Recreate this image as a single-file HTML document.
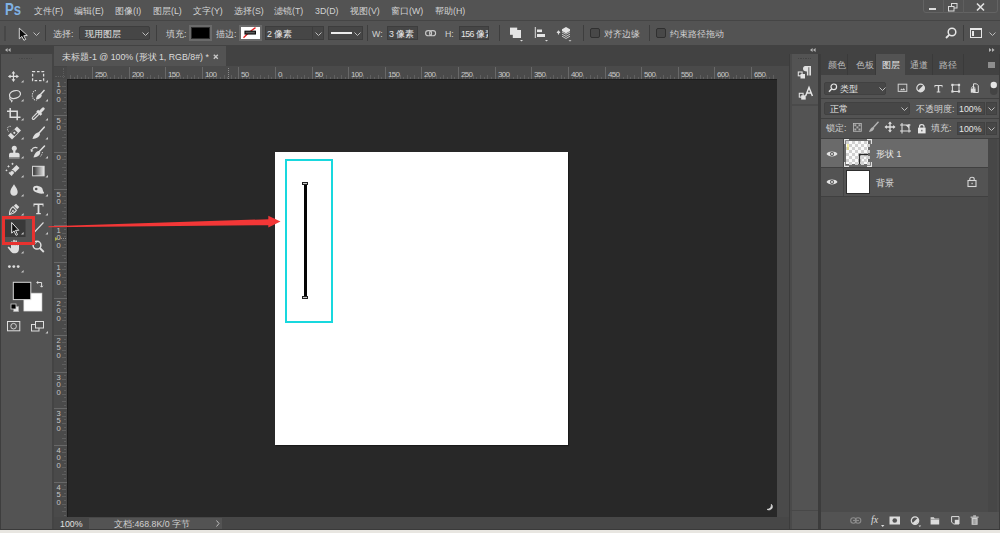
<!DOCTYPE html><html><head><meta charset="utf-8"><style>*{box-sizing:border-box;margin:0;padding:0}
html,body{width:1000px;height:533px;overflow:hidden;background:#535353;font-family:"Liberation Sans",sans-serif;color:#d2d2d2;font-size:8.8px}
.a{position:absolute}
.t{position:absolute;white-space:nowrap;line-height:10px}
svg{position:absolute;overflow:visible}
.rl{position:absolute;font-size:8px;line-height:8px;color:#c8c8c8;letter-spacing:-0.75px;white-space:nowrap}
.vl{position:absolute;font-size:7.6px;line-height:7.3px;color:#c8c8c8;width:8px;text-align:center;white-space:normal;word-break:break-all}
</style></head><body>
<div class="a" style="left:0px;top:0px;width:1000px;height:20px;background:#535353;"></div>
<div class="a" style="left:0px;top:20px;width:1000px;height:1px;background:#454545;"></div>
<div class="t" style="left:5.3px;top:1.3px;font-size:16.5px;line-height:16px;font-weight:bold;color:#80b2e4;transform:scaleX(0.8);transform-origin:0 0">Ps</div>
<div class="t" style="left:34px;top:6px;">文件(F)</div>
<div class="t" style="left:74px;top:6px;">编辑(E)</div>
<div class="t" style="left:115px;top:6px;">图像(I)</div>
<div class="t" style="left:153px;top:6px;">图层(L)</div>
<div class="t" style="left:193px;top:6px;">文字(Y)</div>
<div class="t" style="left:234px;top:6px;">选择(S)</div>
<div class="t" style="left:274px;top:6px;">滤镜(T)</div>
<div class="t" style="left:315px;top:6px;">3D(D)</div>
<div class="t" style="left:350px;top:6px;">视图(V)</div>
<div class="t" style="left:391px;top:6px;">窗口(W)</div>
<div class="t" style="left:435px;top:6px;">帮助(H)</div>
<div class="a" style="left:923px;top:-2px;width:75px;height:15px;border:1px solid #636363;border-radius:0 0 3px 3px"></div>
<div class="a" style="left:943px;top:0px;width:1px;height:13px;background:#5f5f5f;"></div>
<div class="a" style="left:963px;top:0px;width:1px;height:13px;background:#5f5f5f;"></div>
<div class="a" style="left:929px;top:8px;width:7px;height:2px;background:#dcdcdc;"></div>
<svg style="left:948px;top:3px" width="10" height="9" viewBox="0 0 10 9"><rect x="3.5" y="0.5" width="5.5" height="4.5" fill="none" stroke="#dcdcdc" stroke-width="1"/><rect x="0.5" y="3.5" width="5.5" height="4.5" fill="#535353" stroke="#dcdcdc" stroke-width="1"/></svg>
<svg style="left:976px;top:3px" width="9" height="8" viewBox="0 0 9 8"><path d="M1 0.5 L8 7.5 M8 0.5 L1 7.5" stroke="#e2e2e2" stroke-width="1.6"/></svg>
<div class="a" style="left:0px;top:21px;width:1000px;height:24px;background:#535353;"></div>
<div class="a" style="left:4px;top:26px;width:2px;height:15px;background:#474747;"></div>
<svg style="left:18px;top:27px" width="10" height="14" viewBox="0 0 10 14"><path d="M1.3 1.2 L1.3 11.8 L3.9 9.4 L5.9 13.3 L7.7 12.4 L5.8 8.7 L9.3 8.5 Z" fill="#0c0c0c" stroke="#e8e8e8" stroke-width="0.9" stroke-linejoin="miter"/></svg>
<svg style="left:33px;top:32px" width="7" height="5" viewBox="0 0 7 5"><path d="M0.5 0.5 L3.5 3.5 L6.5 0.5" fill="none" stroke="#bdbdbd" stroke-width="1"/></svg>
<div class="a" style="left:45px;top:25px;width:1px;height:16px;background:#3e3e3e;"></div>
<div class="t" style="left:53px;top:29px;">选择:</div>
<div class="a" style="left:79px;top:26px;width:71px;height:14px;background:#464646;border:1px solid #3d3d3d;border-radius:2px"></div>
<div class="t" style="left:85px;top:29px;color:#e6e6e6">现用图层</div>
<svg style="left:142px;top:32px" width="7" height="5" viewBox="0 0 7 5"><path d="M0.5 0.5 L3.5 3.5 L6.5 0.5" fill="none" stroke="#bdbdbd" stroke-width="1"/></svg>
<div class="a" style="left:156px;top:25px;width:1px;height:16px;background:#3e3e3e;"></div>
<div class="t" style="left:166px;top:29px;">填充:</div>
<div class="a" style="left:189px;top:25px;width:23px;height:16px;background:#2e2e2e;border:2px solid #6a6a6a"></div>
<div class="a" style="left:192px;top:28px;width:17px;height:10px;background:#000;"></div>
<div class="t" style="left:216px;top:29px;">描边:</div>
<div class="a" style="left:239px;top:25px;width:23px;height:16px;background:#fff;border:2px solid #6a6a6a"></div>
<svg style="left:241px;top:27px" width="19" height="12" viewBox="0 0 19 12"><path d="M2.5 10.8 L6.8 6.5 M9.5 4.2 L14.5 0.6" stroke="#e42020" stroke-width="1.3"/><rect x="4" y="4.2" width="10.4" height="2.8" fill="#5a5a5a" stroke="#0a0a0a" stroke-width="1.1"/></svg>
<div class="a" style="left:265px;top:26px;width:59px;height:14px;background:#464646;border:1px solid #3d3d3d;"></div>
<div class="a" style="left:312px;top:26px;width:1px;height:14px;background:#3d3d3d;"></div>
<div class="t" style="left:267px;top:29px;color:#e6e6e6">2 像素</div>
<svg style="left:315px;top:32px" width="7" height="5" viewBox="0 0 7 5"><path d="M0.5 0.5 L3.5 3.5 L6.5 0.5" fill="none" stroke="#bdbdbd" stroke-width="1"/></svg>
<div class="a" style="left:328px;top:26px;width:35px;height:14px;background:#464646;border:1px solid #3d3d3d;"></div>
<div class="a" style="left:331px;top:32px;width:21px;height:2px;background:#ececec;"></div>
<svg style="left:354px;top:32px" width="7" height="5" viewBox="0 0 7 5"><path d="M0.5 0.5 L3.5 3.5 L6.5 0.5" fill="none" stroke="#bdbdbd" stroke-width="1"/></svg>
<div class="a" style="left:367px;top:25px;width:1px;height:16px;background:#3e3e3e;"></div>
<div class="t" style="left:372px;top:29px;">W:</div>
<div class="a" style="left:387px;top:26px;width:31px;height:14px;background:#464646;border:1px solid #3d3d3d;"></div>
<div class="t" style="left:389px;top:29px;color:#e6e6e6">3 像素</div>
<svg style="left:425px;top:29.5px" width="12" height="7" viewBox="0 0 12 7"><rect x="0.6" y="0.6" width="6" height="5.2" rx="2.6" fill="none" stroke="#c8c8c8" stroke-width="1.1"/><rect x="4.6" y="0.6" width="6" height="5.2" rx="2.6" fill="none" stroke="#c8c8c8" stroke-width="1.1"/></svg>
<div class="t" style="left:445px;top:29px;">H:</div>
<div class="a" style="left:459px;top:26px;width:30px;height:14px;background:#464646;border:1px solid #3d3d3d;overflow:hidden"><div class="t" style="left:1px;top:2px;color:#e6e6e6"><span style="letter-spacing:-0.6px">156 </span>像素</div></div>
<div class="a" style="left:499px;top:25px;width:1px;height:16px;background:#3e3e3e;"></div>
<svg style="left:508px;top:26px" width="17" height="17" viewBox="0 0 17 17"><rect x="2" y="1.6" width="7.2" height="7.2" fill="#e4e4e4"/><rect x="4.8" y="4" width="8.2" height="8" fill="#e4e4e4"/><path d="M12 14 h3 l-1.5 1.5z" fill="#dcdcdc"/></svg>
<svg style="left:533px;top:26px" width="17" height="17" viewBox="0 0 17 17"><rect x="1.8" y="1" width="1" height="11" fill="#dcdcdc"/><rect x="4" y="3.5" width="5" height="2.6" fill="#e4e4e4"/><rect x="4" y="8" width="8" height="3" fill="#e4e4e4"/><path d="M12 14 h3 l-1.5 1.5z" fill="#dcdcdc"/></svg>
<svg style="left:555px;top:26px" width="18" height="17" viewBox="0 0 18 17"><path d="M3.5 8.5 V5.5 M2 6.8 L3.5 5 L5 6.8" fill="none" stroke="#dcdcdc" stroke-width="1.1"/><path d="M11 1 L15 3.2 V5 L11 7.2 L7 5 V3.2z" fill="#e4e4e4"/><path d="M7 6 L11 8.2 L15 6 M7 8.2 L11 10.4 L15 8.2 M7 10.2 L11 12.5 L15 10.2" fill="none" stroke="#cfcfcf" stroke-width="0.9"/><path d="M13.5 14.2 h3 l-1.5 1.3z" fill="#dcdcdc"/></svg>
<div class="a" style="left:583px;top:25px;width:1px;height:16px;background:#3e3e3e;"></div>
<div class="a" style="left:590px;top:28px;width:10px;height:10px;background:#484848;border:1px solid #303030;border-radius:2px"></div>
<div class="t" style="left:604px;top:29px;">对齐边缘</div>
<div class="a" style="left:649px;top:25px;width:1px;height:16px;background:#3e3e3e;"></div>
<div class="a" style="left:656px;top:28px;width:10px;height:10px;background:#484848;border:1px solid #303030;border-radius:2px"></div>
<div class="t" style="left:670px;top:29px;">约束路径拖动</div>
<svg style="left:945px;top:27px" width="12" height="12" viewBox="0 0 12 12"><circle cx="7" cy="5" r="3.8" fill="none" stroke="#e6e6e6" stroke-width="1.5"/><path d="M4.2 7.8 L1 11" stroke="#e6e6e6" stroke-width="1.8"/></svg>
<div class="a" style="left:963px;top:25px;width:1px;height:16px;background:#3e3e3e;"></div>
<div class="a" style="left:970px;top:28px;width:12px;height:10px;background:transparent;border:1px solid #e6e6e6;border-top-width:2px"></div>
<div class="a" style="left:972px;top:31px;width:1.5px;height:5px;background:#e6e6e6;"></div>
<svg style="left:989px;top:32px" width="7" height="5" viewBox="0 0 7 5"><path d="M0.5 0.5 L3.5 3.5 L6.5 0.5" fill="none" stroke="#bdbdbd" stroke-width="1"/></svg>
<div class="a" style="left:0px;top:45px;width:1000px;height:9px;background:#424242;"></div>
<svg style="left:5px;top:47.5px" width="6" height="4" viewBox="0 0 6 4"><path d="M2.6 0 L0 2 L2.6 4z M5.6 0 L3 2 L5.6 4z" fill="#b4b4b4"/></svg>
<div class="a" style="left:0px;top:54px;width:54px;height:476px;background:#3e3e3e;"></div>
<div class="a" style="left:1px;top:54px;width:51px;height:475px;background:#535353;"></div>
<div class="a" style="left:19.0px;top:58px;width:1.4px;height:1.4px;background:#474747;"></div>
<div class="a" style="left:21.4px;top:58px;width:1.4px;height:1.4px;background:#474747;"></div>
<div class="a" style="left:23.8px;top:58px;width:1.4px;height:1.4px;background:#474747;"></div>
<div class="a" style="left:26.2px;top:58px;width:1.4px;height:1.4px;background:#474747;"></div>
<div class="a" style="left:28.6px;top:58px;width:1.4px;height:1.4px;background:#474747;"></div>
<div class="a" style="left:31.0px;top:58px;width:1.4px;height:1.4px;background:#474747;"></div>
<svg style="left:0;top:0" width="52" height="340" viewBox="0 0 52 340"><rect x="4.5" y="220" width="21" height="17" fill="#393939"/><path d="M10 76.4 H17 M13.45 72.8 V80" stroke="#dedede" stroke-width="1.2"/><path d="M7.9 76.4 L10.6 74.5 L10.6 78.3z M19 76.4 L16.3 74.5 L16.3 78.3z M13.45 70.9 L11.55 73.6 L15.35 73.6z M13.45 81.9 L11.55 79.2 L15.35 79.2z" fill="#dedede"/><path d="M23.6 82.6 L21.0 82.6 L23.6 80.0z" fill="#c8c8c8"/><rect x="32.6" y="71.6" width="11" height="9" fill="none" stroke="#dedede" stroke-width="1.3" stroke-dasharray="2.6 1.8"/><path d="M48 82.6 L45.4 82.6 L48 80.0z" fill="#c8c8c8"/><ellipse cx="15" cy="94.6" rx="5.6" ry="3.8" transform="rotate(-18 15 94.6)" fill="none" stroke="#dedede" stroke-width="1.3"/><path d="M10.2 97 C9 99 10.5 100 12 100.5 C12.5 101 11.5 102 11 102" fill="none" stroke="#dedede" stroke-width="1.1"/><path d="M23.6 101.6 L21.0 101.6 L23.6 99.0z" fill="#c8c8c8"/><path d="M36 90.5 C31 91 31 100 36.5 100.5" fill="none" stroke="#dedede" stroke-width="1.1" stroke-dasharray="1.2 1"/><path d="M44.5 90 L40 95" stroke="#dedede" stroke-width="1.4"/><path d="M40.5 94 C38 94 36 96.5 36 99.5 C39 99.5 41.5 98 41.8 95.3z" fill="#dedede"/><path d="M48 101.6 L45.4 101.6 L48 99.0z" fill="#c8c8c8"/><path d="M10.2 108 V117.3 H20.5 M7 111.2 H17.2 V120.3" fill="none" stroke="#dedede" stroke-width="1.5"/><path d="M23.6 120.6 L21.0 120.6 L23.6 118.0z" fill="#c8c8c8"/><path d="M33.4 118.2 L38.3 113.3" stroke="#dedede" stroke-width="3.4" stroke-linecap="round"/><path d="M33.4 118.2 L38.3 113.3" stroke="#535353" stroke-width="1.2" stroke-linecap="round"/><path d="M37.2 110.6 L41.4 114.8" stroke="#dedede" stroke-width="2.6"/><path d="M39.8 112.2 L43.2 108.8" stroke="#dedede" stroke-width="3" stroke-linecap="round"/><path d="M48 120.6 L45.4 120.6 L48 118.0z" fill="#c8c8c8"/><path d="M8 135.5 L17 126.5 L21 130.5 L12 139.5z" fill="#dedede"/><rect x="11.8" y="130.3" width="5" height="5" transform="rotate(45 14.3 132.8)" fill="#535353"/><circle cx="14.3" cy="132.8" r="1.1" fill="#dedede"/><path d="M8.5 131.5 C6 128 8.5 125.5 11 126.5" fill="none" stroke="#dedede" stroke-width="0.9" stroke-dasharray="1 0.8"/><path d="M23.6 139.6 L21.0 139.6 L23.6 137.0z" fill="#c8c8c8"/><path d="M44.2 127.2 L38.5 133.5" stroke="#dedede" stroke-width="1.6" stroke-linecap="round"/><path d="M38.8 132.5 C36 132.5 33.5 135 32.5 139 C36.5 138.5 39.5 137 40 134z" fill="#dedede"/><path d="M48 139.6 L45.4 139.6 L48 137.0z" fill="#c8c8c8"/><circle cx="14.3" cy="148.3" r="2.5" fill="#dedede"/><rect x="13.2" y="149.5" width="2.2" height="3.5" fill="#dedede"/><path d="M9 157 V154.5 C9 153.3 10 152.8 11.5 152.8 H17 C18.5 152.8 19.6 153.3 19.6 154.5 V157z" fill="#dedede"/><rect x="9" y="157.3" width="10.6" height="1.2" fill="#aaa"/><path d="M23.6 158.6 L21.0 158.6 L23.6 156.0z" fill="#c8c8c8"/><path d="M44.5 146 L38.8 152" stroke="#dedede" stroke-width="1.5" stroke-linecap="round"/><path d="M39 151 C36.5 151 34.5 153.5 33.5 157.5 C37.3 157 40 155.5 40.3 152.5z" fill="#dedede"/><path d="M42.5 152 C42 154.5 41 156 40 157" fill="none" stroke="#dedede" stroke-width="0.9" stroke-dasharray="1 0.8"/><path d="M31.5 150 C33 147.5 35.5 147 37.5 148" fill="none" stroke="#dedede" stroke-width="1.1"/><path d="M30.5 149 L33.5 151 L31 152z" fill="#dedede"/><path d="M48 158.6 L45.4 158.6 L48 156.0z" fill="#c8c8c8"/><path d="M12 175.5 L19.5 168 L16.5 165 L9 172.5z" fill="#dedede"/><circle cx="12" cy="173" r="2.5" fill="none" stroke="#535353" stroke-width="1"/><path d="M9 172.5 L12 175.5" stroke="#dedede" stroke-width="1.2"/><path d="M8.5 165 l0.6 1 l1 0.4 l-1 0.4 l-0.6 1 l-0.6 -1 l-1 -0.4 l1 -0.4z M12.5 162.5 l0.6 1 l1 0.4 l-1 0.4 l-0.6 1 l-0.6 -1 l-1 -0.4 l1 -0.4z M6.5 169.3 l0.5 0.8 l0.8 0.3 l-0.8 0.3 l-0.5 0.8 l-0.5 -0.8 l-0.8 -0.3 l0.8 -0.3z" fill="#dedede"/><path d="M23.6 177.6 L21.0 177.6 L23.6 175.0z" fill="#c8c8c8"/><defs><linearGradient id="gr" x1="0" x2="1" y1="0" y2="0"><stop offset="0" stop-color="#2a2a2a"/><stop offset="1" stop-color="#e8e8e8"/></linearGradient></defs><rect x="32.6" y="166.3" width="11.5" height="9.5" fill="url(#gr)" stroke="#dedede" stroke-width="1"/><path d="M48 177.6 L45.4 177.6 L48 175.0z" fill="#c8c8c8"/><path d="M14 184.3 C12 187.5 10.3 189.5 10.3 192 C10.3 194.3 12 195.8 14 195.8 C16 195.8 17.7 194.3 17.7 192 C17.7 189.5 16 187.5 14 184.3z" fill="#dedede"/><path d="M23.6 196.6 L21.0 196.6 L23.6 194.0z" fill="#c8c8c8"/><path d="M33 188.5 C33 186 36 185.5 38 186 C40.5 186.5 42.8 187.5 42.8 190 C43 192 44.5 192 44 193.5 C40 194 37 193 35.5 192 C34 191.5 33 190.5 33 188.5z" fill="#dedede"/><circle cx="36.2" cy="189" r="1.3" fill="#535353"/><path d="M48 196.6 L45.4 196.6 L48 194.0z" fill="#c8c8c8"/><path d="M9.5 214.5 C9.5 211 10.5 208.5 13 206.8 L16.5 210.3 C14.8 212.8 12.5 214 9.5 214.5z" fill="none" stroke="#dedede" stroke-width="1.1"/><path d="M9.5 214.5 L12.7 211.3" stroke="#dedede" stroke-width="0.8"/><circle cx="13" cy="211" r="0.9" fill="#dedede"/><path d="M13.8 205.8 L16 203.8 L19.3 207 L17.3 209.3z" fill="#dedede"/><path d="M23.6 215.6 L21.0 215.6 L23.6 213.0z" fill="#c8c8c8"/><path d="M33.5 203.6 H43.5 V206.5 H42.6 V205 H39.4 V213 H40.8 V214.2 H36.2 V213 H37.6 V205 H34.4 V206.5 H33.5z" fill="#dedede"/><path d="M48 215.6 L45.4 215.6 L48 213.0z" fill="#c8c8c8"/><path d="M11.7 222.5 V233.2 L14 230.8 L16 235.3 L17.5 234.6 L15.5 230.3 L18.8 230.3z" fill="#0e0e0e" stroke="#e4e4e4" stroke-width="1"/><path d="M23.6 234.6 L21.0 234.6 L23.6 232.0z" fill="#c8c8c8"/><path d="M34.5 232 L43.5 222.5" stroke="#dedede" stroke-width="1.1"/><path d="M48 234.6 L45.4 234.6 L48 232.0z" fill="#c8c8c8"/><path d="M11.9 247 V242 M14 246.5 V240.6 M16.1 246.5 V241 M18.2 247 V242.6" stroke="#dedede" stroke-width="1.6" stroke-linecap="round"/><path d="M11 245.5 H19 V248.5 C19 251 18 253 15.5 253.3 H13.5 C12 253 11 252 10 250.5 L7.8 247.8 C7.5 247 8.4 246.4 9.2 247 L11 248.5z" fill="#dedede"/><path d="M23.6 253.6 L21.0 253.6 L23.6 251.0z" fill="#c8c8c8"/><circle cx="37" cy="245.2" r="3.9" fill="none" stroke="#dedede" stroke-width="1.5"/><path d="M39.8 248 L43.8 252" stroke="#dedede" stroke-width="1.8"/><path d="M35 244 C35.3 243 36 242.5 37 242.5" fill="none" stroke="#dedede" stroke-width="0.8"/><circle cx="9.4" cy="266.6" r="1.4" fill="#dedede"/><circle cx="13.8" cy="266.6" r="1.4" fill="#dedede"/><circle cx="18.2" cy="266.6" r="1.4" fill="#dedede"/><path d="M23.6 272.6 L21.0 272.6 L23.6 270.0z" fill="#c8c8c8"/><rect x="23.8" y="293.1" width="18.2" height="18" fill="#fff" stroke="#bdbdbd" stroke-width="0.6"/><rect x="13.3" y="282.3" width="17.5" height="17.3" fill="#000" stroke="#d8d8d8" stroke-width="1"/><path d="M38 281.2 L36.8 282.5 L38 283.8 M37 282.5 H41.6 V287 M40.3 285.8 L41.6 287.2 L42.9 285.8" fill="none" stroke="#dedede" stroke-width="1"/><rect x="13.5" y="306.5" width="5.2" height="5.2" fill="#e8e8e8" stroke="#999" stroke-width="0.5"/><rect x="11" y="304" width="5" height="5" fill="#000" stroke="#cfcfcf" stroke-width="0.8"/><rect x="7.5" y="321.5" width="12.3" height="9.3" fill="none" stroke="#dedede" stroke-width="1"/><circle cx="13.6" cy="326.2" r="2.8" fill="none" stroke="#dedede" stroke-width="0.9"/><rect x="31.5" y="324.5" width="7.5" height="6.5" fill="none" stroke="#dedede" stroke-width="1"/><rect x="35.5" y="321.5" width="8" height="6.5" fill="#535353" stroke="#dedede" stroke-width="1"/><path d="M48 333.6 L45.4 333.6 L48 331.0z" fill="#c8c8c8"/></svg>
<div class="a" style="left:1.5px;top:216px;width:33.5px;height:29px;background:transparent;border:3px solid #e8322f"></div>
<div class="a" style="left:52px;top:54px;width:2px;height:476px;background:#444444;"></div>
<div class="a" style="left:54px;top:45px;width:735px;height:485px;background:#424242;"></div>
<div class="a" style="left:54px;top:46px;width:172px;height:20px;background:#535353;"></div>
<div class="t" style="left:62px;top:52px;color:#dcdcdc">未标题-1 @ 100% (形状 1, RGB/8#) *</div>
<svg style="left:213.3px;top:53.8px" width="6" height="6" viewBox="0 0 6 6"><path d="M0.8 0.8 L4.8 4.8 M4.8 0.8 L0.8 4.8" stroke="#c8c8c8" stroke-width="1.35"/></svg>
<div class="a" style="left:54px;top:66px;width:723px;height:13px;background:#4a4a4a;"></div>
<div class="a" style="left:54px;top:79px;width:13px;height:438px;background:#4a4a4a;"></div>
<div class="a" style="left:67px;top:79px;width:710px;height:438px;background:#282828;"></div>
<div class="a" style="left:67px;top:78.6px;width:710px;height:1px;background:#1c1c1c;"></div>
<div class="a" style="left:66.6px;top:79px;width:1px;height:438px;background:#1c1c1c;"></div>
<div class="a" style="left:54px;top:66px;width:13px;height:13px;background:#474747;border-top:1px solid #444"></div>
<div class="a" style="left:63px;top:68px;width:1px;height:10px;background:transparent;border-left:1px dotted #5c5c5c"></div>
<div class="a" style="left:55px;top:76px;width:10px;height:1px;background:transparent;border-top:1px dotted #5c5c5c"></div>
<svg style="left:0;top:0" width="1000" height="533" viewBox="0 0 1000 533" shape-rendering="crispEdges"><rect x="70" y="75" width="1" height="4" fill="#5f5f5f"/><rect x="74" y="77" width="1" height="2" fill="#5f5f5f"/><rect x="77" y="75" width="1" height="4" fill="#5f5f5f"/><rect x="81" y="77" width="1" height="2" fill="#5f5f5f"/><rect x="85" y="75" width="1" height="4" fill="#5f5f5f"/><rect x="88" y="77" width="1" height="2" fill="#5f5f5f"/><rect x="92" y="67" width="1" height="12" fill="#686868"/><rect x="96" y="77" width="1" height="2" fill="#5f5f5f"/><rect x="99" y="75" width="1" height="4" fill="#5f5f5f"/><rect x="103" y="77" width="1" height="2" fill="#5f5f5f"/><rect x="107" y="75" width="1" height="4" fill="#5f5f5f"/><rect x="110" y="77" width="1" height="2" fill="#5f5f5f"/><rect x="114" y="75" width="1" height="4" fill="#5f5f5f"/><rect x="118" y="77" width="1" height="2" fill="#5f5f5f"/><rect x="121" y="75" width="1" height="4" fill="#5f5f5f"/><rect x="125" y="77" width="1" height="2" fill="#5f5f5f"/><rect x="129" y="67" width="1" height="12" fill="#686868"/><rect x="132" y="77" width="1" height="2" fill="#5f5f5f"/><rect x="136" y="75" width="1" height="4" fill="#5f5f5f"/><rect x="140" y="77" width="1" height="2" fill="#5f5f5f"/><rect x="143" y="75" width="1" height="4" fill="#5f5f5f"/><rect x="147" y="77" width="1" height="2" fill="#5f5f5f"/><rect x="150" y="75" width="1" height="4" fill="#5f5f5f"/><rect x="154" y="77" width="1" height="2" fill="#5f5f5f"/><rect x="158" y="75" width="1" height="4" fill="#5f5f5f"/><rect x="161" y="77" width="1" height="2" fill="#5f5f5f"/><rect x="165" y="67" width="1" height="12" fill="#686868"/><rect x="169" y="77" width="1" height="2" fill="#5f5f5f"/><rect x="172" y="75" width="1" height="4" fill="#5f5f5f"/><rect x="176" y="77" width="1" height="2" fill="#5f5f5f"/><rect x="180" y="75" width="1" height="4" fill="#5f5f5f"/><rect x="183" y="77" width="1" height="2" fill="#5f5f5f"/><rect x="187" y="75" width="1" height="4" fill="#5f5f5f"/><rect x="191" y="77" width="1" height="2" fill="#5f5f5f"/><rect x="194" y="75" width="1" height="4" fill="#5f5f5f"/><rect x="198" y="77" width="1" height="2" fill="#5f5f5f"/><rect x="202" y="67" width="1" height="12" fill="#686868"/><rect x="205" y="77" width="1" height="2" fill="#5f5f5f"/><rect x="209" y="75" width="1" height="4" fill="#5f5f5f"/><rect x="213" y="77" width="1" height="2" fill="#5f5f5f"/><rect x="216" y="75" width="1" height="4" fill="#5f5f5f"/><rect x="220" y="77" width="1" height="2" fill="#5f5f5f"/><rect x="224" y="75" width="1" height="4" fill="#5f5f5f"/><rect x="227" y="77" width="1" height="2" fill="#5f5f5f"/><rect x="231" y="75" width="1" height="4" fill="#5f5f5f"/><rect x="235" y="77" width="1" height="2" fill="#5f5f5f"/><rect x="238" y="67" width="1" height="12" fill="#686868"/><rect x="242" y="77" width="1" height="2" fill="#5f5f5f"/><rect x="246" y="75" width="1" height="4" fill="#5f5f5f"/><rect x="249" y="77" width="1" height="2" fill="#5f5f5f"/><rect x="253" y="75" width="1" height="4" fill="#5f5f5f"/><rect x="257" y="77" width="1" height="2" fill="#5f5f5f"/><rect x="260" y="75" width="1" height="4" fill="#5f5f5f"/><rect x="264" y="77" width="1" height="2" fill="#5f5f5f"/><rect x="268" y="75" width="1" height="4" fill="#5f5f5f"/><rect x="271" y="77" width="1" height="2" fill="#5f5f5f"/><rect x="275" y="67" width="1" height="12" fill="#686868"/><rect x="279" y="77" width="1" height="2" fill="#5f5f5f"/><rect x="282" y="75" width="1" height="4" fill="#5f5f5f"/><rect x="286" y="77" width="1" height="2" fill="#5f5f5f"/><rect x="290" y="75" width="1" height="4" fill="#5f5f5f"/><rect x="293" y="77" width="1" height="2" fill="#5f5f5f"/><rect x="297" y="75" width="1" height="4" fill="#5f5f5f"/><rect x="301" y="77" width="1" height="2" fill="#5f5f5f"/><rect x="304" y="75" width="1" height="4" fill="#5f5f5f"/><rect x="308" y="77" width="1" height="2" fill="#5f5f5f"/><rect x="312" y="67" width="1" height="12" fill="#686868"/><rect x="315" y="77" width="1" height="2" fill="#5f5f5f"/><rect x="319" y="75" width="1" height="4" fill="#5f5f5f"/><rect x="323" y="77" width="1" height="2" fill="#5f5f5f"/><rect x="326" y="75" width="1" height="4" fill="#5f5f5f"/><rect x="330" y="77" width="1" height="2" fill="#5f5f5f"/><rect x="334" y="75" width="1" height="4" fill="#5f5f5f"/><rect x="337" y="77" width="1" height="2" fill="#5f5f5f"/><rect x="341" y="75" width="1" height="4" fill="#5f5f5f"/><rect x="345" y="77" width="1" height="2" fill="#5f5f5f"/><rect x="348" y="67" width="1" height="12" fill="#686868"/><rect x="352" y="77" width="1" height="2" fill="#5f5f5f"/><rect x="356" y="75" width="1" height="4" fill="#5f5f5f"/><rect x="359" y="77" width="1" height="2" fill="#5f5f5f"/><rect x="363" y="75" width="1" height="4" fill="#5f5f5f"/><rect x="367" y="77" width="1" height="2" fill="#5f5f5f"/><rect x="370" y="75" width="1" height="4" fill="#5f5f5f"/><rect x="374" y="77" width="1" height="2" fill="#5f5f5f"/><rect x="378" y="75" width="1" height="4" fill="#5f5f5f"/><rect x="381" y="77" width="1" height="2" fill="#5f5f5f"/><rect x="385" y="67" width="1" height="12" fill="#686868"/><rect x="389" y="77" width="1" height="2" fill="#5f5f5f"/><rect x="392" y="75" width="1" height="4" fill="#5f5f5f"/><rect x="396" y="77" width="1" height="2" fill="#5f5f5f"/><rect x="400" y="75" width="1" height="4" fill="#5f5f5f"/><rect x="403" y="77" width="1" height="2" fill="#5f5f5f"/><rect x="407" y="75" width="1" height="4" fill="#5f5f5f"/><rect x="410" y="77" width="1" height="2" fill="#5f5f5f"/><rect x="414" y="75" width="1" height="4" fill="#5f5f5f"/><rect x="418" y="77" width="1" height="2" fill="#5f5f5f"/><rect x="421" y="67" width="1" height="12" fill="#686868"/><rect x="425" y="77" width="1" height="2" fill="#5f5f5f"/><rect x="429" y="75" width="1" height="4" fill="#5f5f5f"/><rect x="432" y="77" width="1" height="2" fill="#5f5f5f"/><rect x="436" y="75" width="1" height="4" fill="#5f5f5f"/><rect x="440" y="77" width="1" height="2" fill="#5f5f5f"/><rect x="443" y="75" width="1" height="4" fill="#5f5f5f"/><rect x="447" y="77" width="1" height="2" fill="#5f5f5f"/><rect x="451" y="75" width="1" height="4" fill="#5f5f5f"/><rect x="454" y="77" width="1" height="2" fill="#5f5f5f"/><rect x="458" y="67" width="1" height="12" fill="#686868"/><rect x="462" y="77" width="1" height="2" fill="#5f5f5f"/><rect x="465" y="75" width="1" height="4" fill="#5f5f5f"/><rect x="469" y="77" width="1" height="2" fill="#5f5f5f"/><rect x="473" y="75" width="1" height="4" fill="#5f5f5f"/><rect x="476" y="77" width="1" height="2" fill="#5f5f5f"/><rect x="480" y="75" width="1" height="4" fill="#5f5f5f"/><rect x="484" y="77" width="1" height="2" fill="#5f5f5f"/><rect x="487" y="75" width="1" height="4" fill="#5f5f5f"/><rect x="491" y="77" width="1" height="2" fill="#5f5f5f"/><rect x="495" y="67" width="1" height="12" fill="#686868"/><rect x="498" y="77" width="1" height="2" fill="#5f5f5f"/><rect x="502" y="75" width="1" height="4" fill="#5f5f5f"/><rect x="506" y="77" width="1" height="2" fill="#5f5f5f"/><rect x="509" y="75" width="1" height="4" fill="#5f5f5f"/><rect x="513" y="77" width="1" height="2" fill="#5f5f5f"/><rect x="517" y="75" width="1" height="4" fill="#5f5f5f"/><rect x="520" y="77" width="1" height="2" fill="#5f5f5f"/><rect x="524" y="75" width="1" height="4" fill="#5f5f5f"/><rect x="528" y="77" width="1" height="2" fill="#5f5f5f"/><rect x="531" y="67" width="1" height="12" fill="#686868"/><rect x="535" y="77" width="1" height="2" fill="#5f5f5f"/><rect x="539" y="75" width="1" height="4" fill="#5f5f5f"/><rect x="542" y="77" width="1" height="2" fill="#5f5f5f"/><rect x="546" y="75" width="1" height="4" fill="#5f5f5f"/><rect x="550" y="77" width="1" height="2" fill="#5f5f5f"/><rect x="553" y="75" width="1" height="4" fill="#5f5f5f"/><rect x="557" y="77" width="1" height="2" fill="#5f5f5f"/><rect x="561" y="75" width="1" height="4" fill="#5f5f5f"/><rect x="564" y="77" width="1" height="2" fill="#5f5f5f"/><rect x="568" y="67" width="1" height="12" fill="#686868"/><rect x="572" y="77" width="1" height="2" fill="#5f5f5f"/><rect x="575" y="75" width="1" height="4" fill="#5f5f5f"/><rect x="579" y="77" width="1" height="2" fill="#5f5f5f"/><rect x="583" y="75" width="1" height="4" fill="#5f5f5f"/><rect x="586" y="77" width="1" height="2" fill="#5f5f5f"/><rect x="590" y="75" width="1" height="4" fill="#5f5f5f"/><rect x="594" y="77" width="1" height="2" fill="#5f5f5f"/><rect x="597" y="75" width="1" height="4" fill="#5f5f5f"/><rect x="601" y="77" width="1" height="2" fill="#5f5f5f"/><rect x="605" y="67" width="1" height="12" fill="#686868"/><rect x="608" y="77" width="1" height="2" fill="#5f5f5f"/><rect x="612" y="75" width="1" height="4" fill="#5f5f5f"/><rect x="616" y="77" width="1" height="2" fill="#5f5f5f"/><rect x="619" y="75" width="1" height="4" fill="#5f5f5f"/><rect x="623" y="77" width="1" height="2" fill="#5f5f5f"/><rect x="627" y="75" width="1" height="4" fill="#5f5f5f"/><rect x="630" y="77" width="1" height="2" fill="#5f5f5f"/><rect x="634" y="75" width="1" height="4" fill="#5f5f5f"/><rect x="638" y="77" width="1" height="2" fill="#5f5f5f"/><rect x="641" y="67" width="1" height="12" fill="#686868"/><rect x="645" y="77" width="1" height="2" fill="#5f5f5f"/><rect x="649" y="75" width="1" height="4" fill="#5f5f5f"/><rect x="652" y="77" width="1" height="2" fill="#5f5f5f"/><rect x="656" y="75" width="1" height="4" fill="#5f5f5f"/><rect x="660" y="77" width="1" height="2" fill="#5f5f5f"/><rect x="663" y="75" width="1" height="4" fill="#5f5f5f"/><rect x="667" y="77" width="1" height="2" fill="#5f5f5f"/><rect x="670" y="75" width="1" height="4" fill="#5f5f5f"/><rect x="674" y="77" width="1" height="2" fill="#5f5f5f"/><rect x="678" y="67" width="1" height="12" fill="#686868"/><rect x="681" y="77" width="1" height="2" fill="#5f5f5f"/><rect x="685" y="75" width="1" height="4" fill="#5f5f5f"/><rect x="689" y="77" width="1" height="2" fill="#5f5f5f"/><rect x="692" y="75" width="1" height="4" fill="#5f5f5f"/><rect x="696" y="77" width="1" height="2" fill="#5f5f5f"/><rect x="700" y="75" width="1" height="4" fill="#5f5f5f"/><rect x="703" y="77" width="1" height="2" fill="#5f5f5f"/><rect x="707" y="75" width="1" height="4" fill="#5f5f5f"/><rect x="711" y="77" width="1" height="2" fill="#5f5f5f"/><rect x="714" y="67" width="1" height="12" fill="#686868"/><rect x="718" y="77" width="1" height="2" fill="#5f5f5f"/><rect x="722" y="75" width="1" height="4" fill="#5f5f5f"/><rect x="725" y="77" width="1" height="2" fill="#5f5f5f"/><rect x="729" y="75" width="1" height="4" fill="#5f5f5f"/><rect x="733" y="77" width="1" height="2" fill="#5f5f5f"/><rect x="736" y="75" width="1" height="4" fill="#5f5f5f"/><rect x="740" y="77" width="1" height="2" fill="#5f5f5f"/><rect x="744" y="75" width="1" height="4" fill="#5f5f5f"/><rect x="747" y="77" width="1" height="2" fill="#5f5f5f"/><rect x="751" y="67" width="1" height="12" fill="#686868"/><rect x="755" y="77" width="1" height="2" fill="#5f5f5f"/><rect x="758" y="75" width="1" height="4" fill="#5f5f5f"/><rect x="762" y="77" width="1" height="2" fill="#5f5f5f"/><rect x="766" y="75" width="1" height="4" fill="#5f5f5f"/><rect x="769" y="77" width="1" height="2" fill="#5f5f5f"/><rect x="773" y="75" width="1" height="4" fill="#5f5f5f"/></svg>
<div class="rl" style="left:95px;top:70.9px">250</div>
<div class="rl" style="left:132px;top:70.9px">200</div>
<div class="rl" style="left:168px;top:70.9px">150</div>
<div class="rl" style="left:205px;top:70.9px">100</div>
<div class="rl" style="left:241px;top:70.9px">50</div>
<div class="rl" style="left:278px;top:70.9px">0</div>
<div class="rl" style="left:315px;top:70.9px">50</div>
<div class="rl" style="left:351px;top:70.9px">100</div>
<div class="rl" style="left:388px;top:70.9px">150</div>
<div class="rl" style="left:424px;top:70.9px">200</div>
<div class="rl" style="left:461px;top:70.9px">250</div>
<div class="rl" style="left:498px;top:70.9px">300</div>
<div class="rl" style="left:534px;top:70.9px">350</div>
<div class="rl" style="left:571px;top:70.9px">400</div>
<div class="rl" style="left:608px;top:70.9px">450</div>
<div class="rl" style="left:644px;top:70.9px">500</div>
<div class="rl" style="left:681px;top:70.9px">550</div>
<div class="rl" style="left:717px;top:70.9px">600</div>
<div class="rl" style="left:754px;top:70.9px">650</div>
<svg style="left:0;top:0" width="1000" height="533" viewBox="0 0 1000 533" shape-rendering="crispEdges"><rect x="64" y="82" width="2" height="1" fill="#5f5f5f"/><rect x="62" y="86" width="4" height="1" fill="#5f5f5f"/><rect x="64" y="90" width="2" height="1" fill="#5f5f5f"/><rect x="62" y="93" width="4" height="1" fill="#5f5f5f"/><rect x="64" y="97" width="2" height="1" fill="#5f5f5f"/><rect x="62" y="101" width="4" height="1" fill="#5f5f5f"/><rect x="64" y="104" width="2" height="1" fill="#5f5f5f"/><rect x="62" y="108" width="4" height="1" fill="#5f5f5f"/><rect x="64" y="112" width="2" height="1" fill="#5f5f5f"/><rect x="54" y="115" width="12.5" height="1" fill="#686868"/><rect x="64" y="119" width="2" height="1" fill="#5f5f5f"/><rect x="62" y="123" width="4" height="1" fill="#5f5f5f"/><rect x="64" y="126" width="2" height="1" fill="#5f5f5f"/><rect x="62" y="130" width="4" height="1" fill="#5f5f5f"/><rect x="64" y="134" width="2" height="1" fill="#5f5f5f"/><rect x="62" y="137" width="4" height="1" fill="#5f5f5f"/><rect x="64" y="141" width="2" height="1" fill="#5f5f5f"/><rect x="62" y="145" width="4" height="1" fill="#5f5f5f"/><rect x="64" y="148" width="2" height="1" fill="#5f5f5f"/><rect x="54" y="152" width="12.5" height="1" fill="#686868"/><rect x="64" y="156" width="2" height="1" fill="#5f5f5f"/><rect x="62" y="159" width="4" height="1" fill="#5f5f5f"/><rect x="64" y="163" width="2" height="1" fill="#5f5f5f"/><rect x="62" y="167" width="4" height="1" fill="#5f5f5f"/><rect x="64" y="170" width="2" height="1" fill="#5f5f5f"/><rect x="62" y="174" width="4" height="1" fill="#5f5f5f"/><rect x="64" y="178" width="2" height="1" fill="#5f5f5f"/><rect x="62" y="181" width="4" height="1" fill="#5f5f5f"/><rect x="64" y="185" width="2" height="1" fill="#5f5f5f"/><rect x="54" y="189" width="12.5" height="1" fill="#686868"/><rect x="64" y="192" width="2" height="1" fill="#5f5f5f"/><rect x="62" y="196" width="4" height="1" fill="#5f5f5f"/><rect x="64" y="200" width="2" height="1" fill="#5f5f5f"/><rect x="62" y="203" width="4" height="1" fill="#5f5f5f"/><rect x="64" y="207" width="2" height="1" fill="#5f5f5f"/><rect x="62" y="211" width="4" height="1" fill="#5f5f5f"/><rect x="64" y="214" width="2" height="1" fill="#5f5f5f"/><rect x="62" y="218" width="4" height="1" fill="#5f5f5f"/><rect x="64" y="222" width="2" height="1" fill="#5f5f5f"/><rect x="54" y="225" width="12.5" height="1" fill="#686868"/><rect x="64" y="229" width="2" height="1" fill="#5f5f5f"/><rect x="62" y="233" width="4" height="1" fill="#5f5f5f"/><rect x="64" y="236" width="2" height="1" fill="#5f5f5f"/><rect x="62" y="240" width="4" height="1" fill="#5f5f5f"/><rect x="64" y="244" width="2" height="1" fill="#5f5f5f"/><rect x="62" y="247" width="4" height="1" fill="#5f5f5f"/><rect x="64" y="251" width="2" height="1" fill="#5f5f5f"/><rect x="62" y="255" width="4" height="1" fill="#5f5f5f"/><rect x="64" y="258" width="2" height="1" fill="#5f5f5f"/><rect x="54" y="262" width="12.5" height="1" fill="#686868"/><rect x="64" y="266" width="2" height="1" fill="#5f5f5f"/><rect x="62" y="269" width="4" height="1" fill="#5f5f5f"/><rect x="64" y="273" width="2" height="1" fill="#5f5f5f"/><rect x="62" y="277" width="4" height="1" fill="#5f5f5f"/><rect x="64" y="280" width="2" height="1" fill="#5f5f5f"/><rect x="62" y="284" width="4" height="1" fill="#5f5f5f"/><rect x="64" y="287" width="2" height="1" fill="#5f5f5f"/><rect x="62" y="291" width="4" height="1" fill="#5f5f5f"/><rect x="64" y="295" width="2" height="1" fill="#5f5f5f"/><rect x="54" y="298" width="12.5" height="1" fill="#686868"/><rect x="64" y="302" width="2" height="1" fill="#5f5f5f"/><rect x="62" y="306" width="4" height="1" fill="#5f5f5f"/><rect x="64" y="309" width="2" height="1" fill="#5f5f5f"/><rect x="62" y="313" width="4" height="1" fill="#5f5f5f"/><rect x="64" y="317" width="2" height="1" fill="#5f5f5f"/><rect x="62" y="320" width="4" height="1" fill="#5f5f5f"/><rect x="64" y="324" width="2" height="1" fill="#5f5f5f"/><rect x="62" y="328" width="4" height="1" fill="#5f5f5f"/><rect x="64" y="331" width="2" height="1" fill="#5f5f5f"/><rect x="54" y="335" width="12.5" height="1" fill="#686868"/><rect x="64" y="339" width="2" height="1" fill="#5f5f5f"/><rect x="62" y="342" width="4" height="1" fill="#5f5f5f"/><rect x="64" y="346" width="2" height="1" fill="#5f5f5f"/><rect x="62" y="350" width="4" height="1" fill="#5f5f5f"/><rect x="64" y="353" width="2" height="1" fill="#5f5f5f"/><rect x="62" y="357" width="4" height="1" fill="#5f5f5f"/><rect x="64" y="361" width="2" height="1" fill="#5f5f5f"/><rect x="62" y="364" width="4" height="1" fill="#5f5f5f"/><rect x="64" y="368" width="2" height="1" fill="#5f5f5f"/><rect x="54" y="372" width="12.5" height="1" fill="#686868"/><rect x="64" y="375" width="2" height="1" fill="#5f5f5f"/><rect x="62" y="379" width="4" height="1" fill="#5f5f5f"/><rect x="64" y="383" width="2" height="1" fill="#5f5f5f"/><rect x="62" y="386" width="4" height="1" fill="#5f5f5f"/><rect x="64" y="390" width="2" height="1" fill="#5f5f5f"/><rect x="62" y="394" width="4" height="1" fill="#5f5f5f"/><rect x="64" y="397" width="2" height="1" fill="#5f5f5f"/><rect x="62" y="401" width="4" height="1" fill="#5f5f5f"/><rect x="64" y="405" width="2" height="1" fill="#5f5f5f"/><rect x="54" y="408" width="12.5" height="1" fill="#686868"/><rect x="64" y="412" width="2" height="1" fill="#5f5f5f"/><rect x="62" y="416" width="4" height="1" fill="#5f5f5f"/><rect x="64" y="419" width="2" height="1" fill="#5f5f5f"/><rect x="62" y="423" width="4" height="1" fill="#5f5f5f"/><rect x="64" y="427" width="2" height="1" fill="#5f5f5f"/><rect x="62" y="430" width="4" height="1" fill="#5f5f5f"/><rect x="64" y="434" width="2" height="1" fill="#5f5f5f"/><rect x="62" y="438" width="4" height="1" fill="#5f5f5f"/><rect x="64" y="441" width="2" height="1" fill="#5f5f5f"/><rect x="54" y="445" width="12.5" height="1" fill="#686868"/><rect x="64" y="449" width="2" height="1" fill="#5f5f5f"/><rect x="62" y="452" width="4" height="1" fill="#5f5f5f"/><rect x="64" y="456" width="2" height="1" fill="#5f5f5f"/><rect x="62" y="460" width="4" height="1" fill="#5f5f5f"/><rect x="64" y="463" width="2" height="1" fill="#5f5f5f"/><rect x="62" y="467" width="4" height="1" fill="#5f5f5f"/><rect x="64" y="471" width="2" height="1" fill="#5f5f5f"/><rect x="62" y="474" width="4" height="1" fill="#5f5f5f"/><rect x="64" y="478" width="2" height="1" fill="#5f5f5f"/><rect x="54" y="482" width="12.5" height="1" fill="#686868"/><rect x="64" y="485" width="2" height="1" fill="#5f5f5f"/><rect x="62" y="489" width="4" height="1" fill="#5f5f5f"/><rect x="64" y="493" width="2" height="1" fill="#5f5f5f"/><rect x="62" y="496" width="4" height="1" fill="#5f5f5f"/><rect x="64" y="500" width="2" height="1" fill="#5f5f5f"/><rect x="62" y="504" width="4" height="1" fill="#5f5f5f"/><rect x="64" y="507" width="2" height="1" fill="#5f5f5f"/><rect x="62" y="511" width="4" height="1" fill="#5f5f5f"/><rect x="64" y="515" width="2" height="1" fill="#5f5f5f"/></svg>
<div class="vl" style="left:54.5px;top:81px">1<br>0<br>0</div>
<div class="vl" style="left:54.5px;top:117px">5<br>0</div>
<div class="vl" style="left:54.5px;top:154px">0</div>
<div class="vl" style="left:54.5px;top:191px">5<br>0</div>
<div class="vl" style="left:54.5px;top:227px">1<br>0<br>0</div>
<div class="vl" style="left:54.5px;top:264px">1<br>5<br>0</div>
<div class="vl" style="left:54.5px;top:300px">2<br>0<br>0</div>
<div class="vl" style="left:54.5px;top:337px">2<br>5<br>0</div>
<div class="vl" style="left:54.5px;top:374px">3<br>0<br>0</div>
<div class="vl" style="left:54.5px;top:410px">3<br>5<br>0</div>
<div class="vl" style="left:54.5px;top:447px">4<br>0<br>0</div>
<div class="vl" style="left:54.5px;top:484px">4<br>5<br>0</div>
<div class="a" style="left:228px;top:68px;width:1px;height:11px;background:transparent;border-left:1px dotted #8c8c8c"></div>
<div class="a" style="left:55px;top:238px;width:11px;height:1px;background:transparent;border-top:1px dotted #8c8c8c"></div>
<svg style="left:55px;top:236.5px" width="4" height="4" viewBox="0 0 4 4"><path d="M0 0 L3 2 L0 4z" fill="#a8b048"/></svg>
<div class="a" style="left:777px;top:66px;width:12px;height:451px;background:#4a4a4a;"></div>
<div class="a" style="left:54px;top:517px;width:735px;height:12px;background:#474747;"></div>
<div class="a" style="left:89px;top:518px;width:133px;height:11px;background:#535353;"></div>
<div class="t" style="left:60px;top:518.5px;color:#e0e0e0">100%</div>
<div class="t" style="left:114px;top:518.5px;color:#d0d0d0">文档:468.8K/0 字节</div>
<svg style="left:216px;top:520px" width="4" height="7" viewBox="0 0 4 7"><path d="M0.5 0.5 L3 3.5 L0.5 6.5" fill="none" stroke="#c8c8c8" stroke-width="0.9"/></svg>
<svg style="left:765px;top:502px" width="10" height="10" viewBox="0 0 10 10"><path d="M6.3 2.3 C7.6 3.2 7.8 5.6 6.6 6.8 C5.4 8 3.6 8.3 2 7.4 C3.6 7.2 5.0 6.6 5.7 5.5 C6.4 4.4 6.5 3.3 6.3 2.3z" fill="#dadada" stroke="#dadada" stroke-width="0.7" stroke-linejoin="round"/></svg>
<div class="a" style="left:275px;top:152px;width:293px;height:293px;background:#ffffff;box-shadow:1px 1px 1px rgba(0,0,0,0.35)"></div>
<div class="a" style="left:285px;top:159px;width:48px;height:164px;background:transparent;border:2px solid #18d8de"></div>
<div class="a" style="left:304.2px;top:184px;width:2.6px;height:113px;background:#050505;"></div>
<div class="a" style="left:302px;top:181.5px;width:6px;height:3.8px;background:#c8c8c8;border:1.6px solid #222"></div>
<div class="a" style="left:302px;top:295.8px;width:6px;height:3.6px;background:#c8c8c8;border:1.6px solid #222"></div>
<svg style="left:0px;top:0px" width="1000" height="533" viewBox="0 0 1000 533"><path d="M48.5 226.3 L269 219.2 L269 225.2 L48.5 227.3z" fill="#f33737"/><path d="M268.3 215.8 L280.5 221.6 L268.3 227.6z" fill="#f33737"/></svg>
<div class="a" style="left:789px;top:54px;width:211px;height:476px;background:#3c3c3c;"></div>
<div class="a" style="left:790px;top:54px;width:28px;height:475px;background:#4a4a4a;"></div>
<div class="a" style="left:792px;top:54px;width:26px;height:50px;background:#535353;"></div>
<div class="a" style="left:798.0px;top:58px;width:1.4px;height:1.4px;background:#444444;"></div>
<div class="a" style="left:800.4px;top:58px;width:1.4px;height:1.4px;background:#444444;"></div>
<div class="a" style="left:802.8px;top:58px;width:1.4px;height:1.4px;background:#444444;"></div>
<div class="a" style="left:805.2px;top:58px;width:1.4px;height:1.4px;background:#444444;"></div>
<div class="a" style="left:807.6px;top:58px;width:1.4px;height:1.4px;background:#444444;"></div>
<div class="a" style="left:810.0px;top:58px;width:1.4px;height:1.4px;background:#444444;"></div>
<svg style="left:796px;top:64px" width="17" height="16" viewBox="0 0 17 16"><path d="M9 2 H15 V11.5 H13.3 V3.3 H12.4 V11.5 H10.9 V7.6 C8.3 7.6 7 6.5 7 4.8 C7 3 8.2 2 9 2z" fill="#e0e0e0"/><rect x="2.3" y="8" width="3.8" height="3.8" fill="none" stroke="#e0e0e0" stroke-width="1.1"/><rect x="4.5" y="10" width="4.5" height="4.5" fill="#e4e4e4"/></svg>
<svg style="left:796px;top:86px" width="17" height="14" viewBox="0 0 17 14"><path d="M9.6 10 L13 1.5 L16.4 10 M10.9 7 H15.1" fill="none" stroke="#e6e6e6" stroke-width="1.5"/><rect x="3.3" y="7.3" width="3.8" height="3.8" fill="none" stroke="#e0e0e0" stroke-width="1.1"/><rect x="5.2" y="9.3" width="4.5" height="4.3" fill="#e4e4e4"/></svg>
<div class="a" style="left:792px;top:106px;width:26px;height:405px;background:#535353;"></div>
<div class="a" style="left:792px;top:511px;width:26px;height:18px;background:#535353;"></div>
<div class="a" style="left:790px;top:510px;width:28px;height:1px;background:#484848;"></div>
<div class="a" style="left:820px;top:54px;width:180px;height:476px;background:#3c3c3c;"></div>
<div class="a" style="left:821px;top:54px;width:178px;height:21px;background:#424242;"></div>
<div class="a" style="left:821px;top:54px;width:27px;height:21px;background:#424242;border-right:1px solid #3a3a3a"></div>
<div class="a" style="left:848px;top:54px;width:27.5px;height:21px;background:#424242;border-right:1px solid #3a3a3a"></div>
<div class="a" style="left:875.5px;top:54px;width:29.5px;height:21px;background:#535353;"></div>
<div class="a" style="left:905px;top:54px;width:28px;height:21px;background:#424242;border-right:1px solid #3a3a3a"></div>
<div class="a" style="left:933px;top:54px;width:31px;height:21px;background:#424242;border-right:1px solid #3a3a3a"></div>
<div class="t" style="left:828px;top:60px;color:#bcbcbc">颜色</div>
<div class="t" style="left:856px;top:60px;color:#bcbcbc">色板</div>
<div class="t" style="left:882px;top:60px;color:#e8e8e8">图层</div>
<div class="t" style="left:910px;top:60px;color:#bcbcbc">通道</div>
<div class="t" style="left:939px;top:60px;color:#bcbcbc">路径</div>
<div class="a" style="left:987.5px;top:62px;width:7.5px;height:6px;background:#5e5e5e;"></div>
<div class="a" style="left:987.5px;top:62.3px;width:7.5px;height:1.3px;background:#8e8e8e;"></div>
<div class="a" style="left:987.5px;top:64.3px;width:7.5px;height:1.3px;background:#8e8e8e;"></div>
<div class="a" style="left:987.5px;top:66.3px;width:7.5px;height:1.3px;background:#8e8e8e;"></div>
<div class="a" style="left:821px;top:75px;width:178px;height:437px;background:#4b4b4b;"></div>
<div class="a" style="left:821px;top:75px;width:178px;height:23px;background:#535353;"></div>
<div class="a" style="left:821px;top:98px;width:178px;height:1px;background:#404040;"></div>
<div class="a" style="left:821px;top:99px;width:178px;height:19px;background:#535353;"></div>
<div class="a" style="left:821px;top:118px;width:178px;height:1px;background:#404040;"></div>
<div class="a" style="left:821px;top:119px;width:178px;height:19px;background:#535353;"></div>
<div class="a" style="left:821px;top:138px;width:178px;height:1px;background:#404040;"></div>
<div class="a" style="left:824px;top:81.5px;width:62px;height:13.5px;background:#474747;border:1px solid #414141;border-radius:2px"></div>
<svg style="left:828px;top:83px" width="10" height="10" viewBox="0 0 10 10"><circle cx="5.8" cy="3.8" r="2.8" fill="none" stroke="#e6e6e6" stroke-width="1.2"/><path d="M3.8 5.8 L1 8.8" stroke="#e6e6e6" stroke-width="1.5"/></svg>
<div class="t" style="left:840px;top:83.5px;color:#e6e6e6">类型</div>
<svg style="left:879px;top:87px" width="7" height="5" viewBox="0 0 7 5"><path d="M0.5 0.5 L3.5 3.5 L6.5 0.5" fill="none" stroke="#bdbdbd" stroke-width="1"/></svg>
<svg style="left:897px;top:83px" width="12" height="10" viewBox="0 0 12 10"><rect x="1.2" y="1.2" width="8.6" height="7.2" fill="none" stroke="#d0d0d0" stroke-width="1"/><path d="M3 7.2 L4.6 5.4 L5.6 6.4 L6.8 5 L8.2 7.2z" fill="#d0d0d0"/></svg>
<svg style="left:915px;top:83px" width="11" height="11" viewBox="0 0 11 11"><circle cx="5.6" cy="5" r="3.8" fill="none" stroke="#dcdcdc" stroke-width="1.2"/><path d="M2.9 7.7 L8.3 2.3 A3.8 3.8 0 0 1 2.9 7.7z" fill="#dcdcdc"/></svg>
<svg style="left:933px;top:83px" width="11" height="11" viewBox="0 0 11 11"><path d="M1.5 2 H9.5 V4.2 H8.7 V3 H6.2 V8.6 H7.3 V9.5 H3.7 V8.6 H4.8 V3 H2.3 V4.2 H1.5z" fill="#dcdcdc"/></svg>
<svg style="left:950px;top:83px" width="11" height="11" viewBox="0 0 11 11"><rect x="2.4" y="1.9" width="6.6" height="6.6" fill="none" stroke="#dcdcdc" stroke-width="1"/><rect x="1.3" y="0.8" width="2.2" height="2.2" fill="#dcdcdc"/><rect x="7.9" y="0.8" width="2.2" height="2.2" fill="#dcdcdc"/><rect x="1.3" y="7.4" width="2.2" height="2.2" fill="#dcdcdc"/><rect x="7.9" y="7.4" width="2.2" height="2.2" fill="#dcdcdc"/></svg>
<svg style="left:969px;top:83px" width="11" height="11" viewBox="0 0 11 11"><path d="M4.5 0.8 H7.5 L9.3 2.6 V9.5 H4.5z" fill="none" stroke="#dcdcdc" stroke-width="1"/><rect x="1.8" y="5.5" width="4.8" height="4.2" fill="#dcdcdc"/><path d="M2.7 5.5 V4.5 C2.7 3.3 5.7 3.3 5.7 4.5 V5.5" fill="none" stroke="#dcdcdc" stroke-width="0.9"/></svg>
<svg style="left:989px;top:80px" width="10" height="16" viewBox="0 0 10 16"><rect x="1" y="3" width="7.5" height="12" rx="3.75" fill="#444"/><circle cx="4.75" cy="5" r="3.2" fill="#e6e6e6"/></svg>
<div class="a" style="left:824px;top:101.5px;width:85.5px;height:13.5px;background:#474747;border:1px solid #414141;border-radius:2px"></div>
<div class="t" style="left:830px;top:103.5px;color:#e6e6e6">正常</div>
<svg style="left:901px;top:107px" width="7" height="5" viewBox="0 0 7 5"><path d="M0.5 0.5 L3.5 3.5 L6.5 0.5" fill="none" stroke="#bdbdbd" stroke-width="1"/></svg>
<div class="t" style="left:916px;top:103.5px;color:#d4d4d4">不透明度:</div>
<div class="a" style="left:957px;top:101.5px;width:27.5px;height:13.5px;background:#474747;border:1px solid #414141"></div>
<div class="t" style="left:959px;top:103.5px;color:#e6e6e6">100%</div>
<div class="a" style="left:986px;top:101.5px;width:11px;height:13.5px;background:#474747;border:1px solid #414141"></div>
<svg style="left:988px;top:106.5px" width="7" height="5" viewBox="0 0 7 5"><path d="M0.5 0.5 L3.5 3.5 L6.5 0.5" fill="none" stroke="#bdbdbd" stroke-width="1"/></svg>
<div class="t" style="left:826px;top:123px;color:#d4d4d4">锁定:</div>
<svg style="left:853px;top:123.3px" width="9" height="9" viewBox="0 0 9 9"><rect x="0.5" y="0.5" width="7.8" height="7.8" fill="none" stroke="#bdbdbd" stroke-width="0.8"/><rect x="1.3" y="1.3" width="2" height="2" fill="#aaa"/><rect x="5.5" y="1.3" width="2" height="2" fill="#aaa"/><rect x="3.4" y="3.4" width="2" height="2" fill="#aaa"/><rect x="1.3" y="5.5" width="2" height="2" fill="#aaa"/><rect x="5.5" y="5.5" width="2" height="2" fill="#aaa"/></svg>
<svg style="left:868px;top:121px" width="11" height="12" viewBox="0 0 11 12"><path d="M10.5 0.8 L5.3 6.5" stroke="#b4b4b4" stroke-width="1.4"/><path d="M5.5 6 C3.5 6 1.8 8 1 11 C4 10.6 5.8 9.5 6.3 7z" fill="#b4b4b4"/></svg>
<svg style="left:884px;top:121px" width="12" height="12" viewBox="0 0 12 12"><path d="M2 6 H10 M6 2 V10" stroke="#e0e0e0" stroke-width="1.3"/><path d="M0.5 6 L2.8 4 L2.8 8z M11.5 6 L9.2 4 L9.2 8z M6 0.5 L4 2.8 L8 2.8z M6 11.5 L4 9.2 L8 9.2z" fill="#e0e0e0"/></svg>
<svg style="left:899px;top:121px" width="13" height="13" viewBox="0 0 13 13"><path d="M1 4 H11.5 M3 2 V12.5 M10 3 V11.5 M1 10 H12" fill="none" stroke="#dcdcdc" stroke-width="1.1"/><path d="M6.5 4 L10 7.5 V4z" fill="#dcdcdc"/></svg>
<svg style="left:917px;top:122.5px" width="10" height="11" viewBox="0 0 10 11"><rect x="1" y="4.6" width="7.6" height="5.8" fill="#e8e8e8"/><path d="M2.6 4.8 V3.4 C2.6 1 7 1 7 3.4 V4.8" fill="none" stroke="#e8e8e8" stroke-width="1.2"/><rect x="4.3" y="6.8" width="1.1" height="1.6" fill="#535353"/></svg>
<div class="t" style="left:931px;top:123px;color:#d4d4d4">填充:</div>
<div class="a" style="left:957px;top:121.5px;width:27.5px;height:13.5px;background:#474747;border:1px solid #414141"></div>
<div class="t" style="left:959px;top:123.5px;color:#e6e6e6">100%</div>
<div class="a" style="left:986px;top:121.5px;width:11px;height:13.5px;background:#474747;border:1px solid #414141"></div>
<svg style="left:988px;top:126.5px" width="7" height="5" viewBox="0 0 7 5"><path d="M0.5 0.5 L3.5 3.5 L6.5 0.5" fill="none" stroke="#bdbdbd" stroke-width="1"/></svg>
<div class="a" style="left:821px;top:139px;width:167px;height:28px;background:#6a6a6a;"></div>
<div class="a" style="left:821px;top:167px;width:167px;height:1px;background:#404040;"></div>
<div class="a" style="left:821px;top:168px;width:167px;height:28px;background:#535353;"></div>
<div class="a" style="left:821px;top:196px;width:167px;height:1px;background:#404040;"></div>
<div class="a" style="left:842.5px;top:139px;width:1px;height:57px;background:#454545;"></div>
<svg style="left:826px;top:149.5px" width="12" height="8" viewBox="0 0 12 8"><path d="M0.5 4 C2.5 0.8 9.5 0.8 11.5 4 C9.5 7.2 2.5 7.2 0.5 4z" fill="#e4e4e4"/><circle cx="6" cy="4" r="2" fill="#535353"/><circle cx="6" cy="4" r="1" fill="#e4e4e4"/></svg>
<svg style="left:826px;top:178px" width="12" height="8" viewBox="0 0 12 8"><path d="M0.5 4 C2.5 0.8 9.5 0.8 11.5 4 C9.5 7.2 2.5 7.2 0.5 4z" fill="#e4e4e4"/><circle cx="6" cy="4" r="2" fill="#535353"/><circle cx="6" cy="4" r="1" fill="#e4e4e4"/></svg>
<svg style="left:846px;top:141px" width="22" height="23" viewBox="0 0 22 23"><rect x="0" y="0" width="22" height="23" fill="#fafafa"/><rect x="0" y="0" width="3" height="3" fill="#d0d0d0"/><rect x="6" y="0" width="3" height="3" fill="#d0d0d0"/><rect x="12" y="0" width="3" height="3" fill="#d0d0d0"/><rect x="18" y="0" width="3" height="3" fill="#d0d0d0"/><rect x="3" y="3" width="3" height="3" fill="#d0d0d0"/><rect x="9" y="3" width="3" height="3" fill="#d0d0d0"/><rect x="15" y="3" width="3" height="3" fill="#d0d0d0"/><rect x="21" y="3" width="3" height="3" fill="#d0d0d0"/><rect x="0" y="6" width="3" height="3" fill="#d0d0d0"/><rect x="6" y="6" width="3" height="3" fill="#d0d0d0"/><rect x="12" y="6" width="3" height="3" fill="#d0d0d0"/><rect x="18" y="6" width="3" height="3" fill="#d0d0d0"/><rect x="3" y="9" width="3" height="3" fill="#d0d0d0"/><rect x="9" y="9" width="3" height="3" fill="#d0d0d0"/><rect x="15" y="9" width="3" height="3" fill="#d0d0d0"/><rect x="21" y="9" width="3" height="3" fill="#d0d0d0"/><rect x="0" y="12" width="3" height="3" fill="#d0d0d0"/><rect x="6" y="12" width="3" height="3" fill="#d0d0d0"/><rect x="12" y="12" width="3" height="3" fill="#d0d0d0"/><rect x="18" y="12" width="3" height="3" fill="#d0d0d0"/><rect x="3" y="15" width="3" height="3" fill="#d0d0d0"/><rect x="9" y="15" width="3" height="3" fill="#d0d0d0"/><rect x="15" y="15" width="3" height="3" fill="#d0d0d0"/><rect x="21" y="15" width="3" height="3" fill="#d0d0d0"/><rect x="0" y="18" width="3" height="3" fill="#d0d0d0"/><rect x="6" y="18" width="3" height="3" fill="#d0d0d0"/><rect x="12" y="18" width="3" height="3" fill="#d0d0d0"/><rect x="18" y="18" width="3" height="3" fill="#d0d0d0"/><rect x="3" y="21" width="3" height="3" fill="#d0d0d0"/><rect x="9" y="21" width="3" height="3" fill="#d0d0d0"/><rect x="15" y="21" width="3" height="3" fill="#d0d0d0"/><rect x="21" y="21" width="3" height="3" fill="#d0d0d0"/><rect x="1.5" y="3" width="0.9" height="6" fill="#f0e040"/><path d="M13.5 23 V13.5 H22" fill="none" stroke="#2a2a2a" stroke-width="1.4"/><rect x="15.5" y="15.5" width="5" height="5" fill="none" stroke="#d8d8d8" stroke-width="1"/></svg>
<svg style="left:844px;top:139px" width="28" height="28" viewBox="0 0 28 28"><path d="M0.6 5 V0.6 H5 M23 0.6 H27.4 V5 M0.6 23 V27.4 H5 M23 27.4 H27.4 V23" fill="none" stroke="#e6e6e6" stroke-width="1.1"/></svg>
<div class="t" style="left:876px;top:149px;color:#e8e8e8">形状 1</div>
<div class="a" style="left:846px;top:170px;width:24px;height:24px;background:#ffffff;border:1px solid #2e2e2e"></div>
<div class="t" style="left:876px;top:178px;color:#e0e0e0">背景</div>
<svg style="left:967px;top:176px" width="10" height="11" viewBox="0 0 10 11"><rect x="1" y="4.5" width="8" height="6" fill="none" stroke="#d8d8d8" stroke-width="1.1"/><path d="M2.8 4.5 V3 C2.8 0.6 7.2 0.6 7.2 3 V4.5" fill="none" stroke="#d8d8d8" stroke-width="1.1"/><rect x="4.5" y="6.8" width="1.2" height="1.4" fill="#d8d8d8"/></svg>
<div class="a" style="left:988px;top:139px;width:9px;height:373px;background:#474747;"></div>
<div class="a" style="left:821px;top:512px;width:178px;height:17px;background:#535353;"></div>
<svg style="left:850px;top:517px" width="12" height="7" viewBox="0 0 12 7"><rect x="0.7" y="0.7" width="5.5" height="5.5" rx="2.7" fill="none" stroke="#8c8c8c" stroke-width="1.1"/><rect x="5.3" y="0.7" width="5.5" height="5.5" rx="2.7" fill="none" stroke="#8c8c8c" stroke-width="1.1"/><path d="M3 3.5 H9" stroke="#8c8c8c" stroke-width="1.1"/></svg>
<div class="t" style="left:871px;top:515px;font-size:10px;font-style:italic;color:#dcdcdc;font-family:'Liberation Serif',serif">fx</div>
<svg style="left:881px;top:525px" width="4" height="3" viewBox="0 0 4 3"><path d="M0 0 H3.4 L1.7 2z" fill="#dcdcdc"/></svg>
<svg style="left:889px;top:516px" width="12" height="9" viewBox="0 0 12 9"><rect x="0.5" y="0.5" width="10.5" height="8" fill="#dcdcdc"/><circle cx="5.75" cy="4.5" r="2.3" fill="#535353"/></svg>
<svg style="left:910px;top:515.5px" width="12" height="12" viewBox="0 0 12 12"><circle cx="5" cy="4.6" r="3.7" fill="none" stroke="#dcdcdc" stroke-width="1.2"/><path d="M2.4 7.2 L7.6 2 A3.7 3.7 0 0 1 2.4 7.2z" fill="#dcdcdc"/><path d="M8.5 9.5 H11.2 L9.85 11z" fill="#dcdcdc"/></svg>
<svg style="left:930px;top:515.5px" width="10" height="10" viewBox="0 0 10 10"><path d="M0.6 1.2 H3.8 L4.7 2.4 H9.2 V8.5 H0.6z" fill="#dcdcdc"/><path d="M0.6 3.3 H9.2" stroke="#535353" stroke-width="0.5"/></svg>
<svg style="left:950.5px;top:515.8px" width="10" height="10" viewBox="0 0 10 10"><path d="M0.6 0.6 H8 V8 H2.6 L0.6 6z" fill="none" stroke="#dcdcdc" stroke-width="1"/><path d="M3.8 3.8 H8 V8 H3.8z" fill="#dcdcdc"/></svg>
<svg style="left:969.5px;top:515px" width="10" height="11" viewBox="0 0 10 11"><rect x="1.6" y="2.8" width="6" height="7" fill="#cfcfcf"/><rect x="0.6" y="1.6" width="8" height="1.1" fill="#cfcfcf"/><rect x="3.2" y="0.4" width="2.8" height="1.2" fill="#cfcfcf"/><path d="M3.3 4 V9 M4.6 4 V9 M5.9 4 V9" stroke="#6a6a6a" stroke-width="0.5"/></svg>
<svg style="left:810px;top:47.5px" width="6" height="4" viewBox="0 0 6 4"><path d="M2.6 0 L0 2 L2.6 4z M5.6 0 L3 2 L5.6 4z" fill="#b4b4b4"/></svg>
<svg style="left:989px;top:47.5px" width="6" height="4" viewBox="0 0 6 4"><path d="M0 0 L2.6 2 L0 4z M3 0 L5.6 2 L3 4z" fill="#b4b4b4"/></svg>
<div class="a" style="left:0px;top:529px;width:1000px;height:1px;background:#3a3a3a;"></div>
<div class="a" style="left:0px;top:530px;width:1000px;height:3px;background:#e8e6e1;"></div>
</body></html>
